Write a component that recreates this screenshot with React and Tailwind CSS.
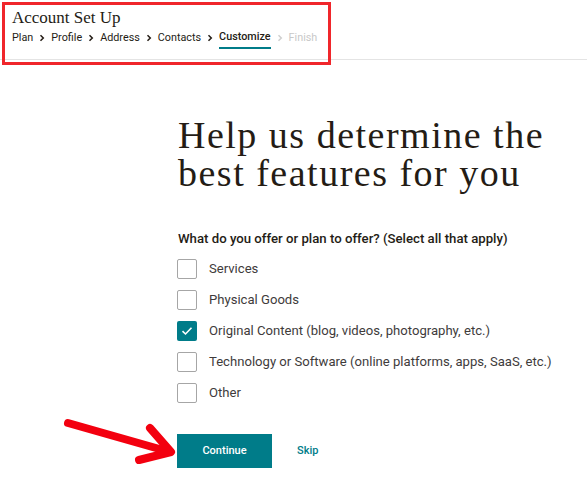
import React from "react";

const Chevron = ({ light }) => (
  <svg width="6" height="8" viewBox="0 0 6 8" className="mx-[6px]" aria-hidden="true">
    <path d="M1.5 1.2 L4.3 4 L1.5 6.8" fill="none" stroke={light ? "#cfcfcf" : "#241c15"} strokeWidth="1.5" />
  </svg>
);

const Box = ({ checked }) =>
  checked ? (
    <span className="flex h-[20px] w-[20px] items-center justify-center rounded-[2px] bg-[#007c89]">
      <svg width="12" height="10" viewBox="0 0 12 10">
        <path d="M1.5 5.2 L4.5 8 L10.5 1.8" fill="none" stroke="#fff" strokeWidth="1.6" />
      </svg>
    </span>
  ) : (
    <span className="h-[20px] w-[20px] rounded-[2px] border border-[#a6a6a6] bg-white" />
  );

export default function App() {
  const steps = ["Plan", "Profile", "Address", "Contacts"];
  const options = [
    ["Services", false],
    ["Physical Goods", false],
    ["Original Content (blog, videos, photography, etc.)", true],
    ["Technology or Software (online platforms, apps, SaaS, etc.)", false],
    ["Other", false],
  ];
  return (
    <div className="relative h-[485px] w-[587px] overflow-hidden bg-white text-[#241c15]" style={{ fontFamily: "Roboto, 'Liberation Sans', sans-serif" }}>
      <header className="h-[60px] border-b border-[#e4e4e4] pl-[12px] pt-[8px]">
        <div className="text-[17px] leading-[20px] text-[#241c15]" style={{ fontFamily: "'Liberation Serif', serif" }}>
          Account Set Up
        </div>
        <nav className="mt-[-1px] flex items-center text-[10.8px] leading-[16px] text-[#241c15]">
          {steps.map((s) => (
            <React.Fragment key={s}>
              <span>{s}</span>
              <Chevron />
            </React.Fragment>
          ))}
          <span className="mt-[2px] border-b-2 border-[#007c89] pb-[2px] font-medium">Customize</span>
          <Chevron light />
          <span className="text-[#c8c8c8]">Finish</span>
        </nav>
      </header>

      <div className="absolute left-[2px] top-[2px] h-[63px] w-[329px] border-[3px] border-[#f0262b] pointer-events-none" />

      <main className="pl-[178px] pt-[56px]">
        <h1 className="text-[38px] leading-[38px] font-normal tracking-[1.5px] text-[#241c15]" style={{ fontFamily: "'Liberation Serif', serif" }}>
          Help us determine the
          <br />
          best features for you
        </h1>
        <p className="mt-[38px] text-[13.2px] font-medium leading-[18px]">
          What do you offer or plan to offer? (Select all that apply)
        </p>
        <div className="ml-[-1px] mt-[11px] flex flex-col gap-[11px]">
          {options.map(([label, checked]) => (
            <label key={label} className="flex items-center gap-[12px] text-[13.1px] leading-[20px] text-[#403b3b]">
              <Box checked={checked} />
              <span>{label}</span>
            </label>
          ))}
        </div>
        <div className="ml-[-1px] mt-[31px] flex items-center">
          <button className="h-[34px] w-[95px] bg-[#007c89] text-[11px] font-medium text-white">Continue</button>
          <span className="ml-[25px] text-[11px] font-medium text-[#007c89]">Skip</span>
        </div>
      </main>

      <svg className="pointer-events-none absolute left-0 top-0" width="587" height="485">
        <g fill="none" stroke="#f3000f" strokeWidth="8" strokeLinecap="round" strokeLinejoin="round">
          <path d="M68 423 L170 452" />
          <path d="M150 428 L171 452 L139 460" />
        </g>
      </svg>
    </div>
  );
}
